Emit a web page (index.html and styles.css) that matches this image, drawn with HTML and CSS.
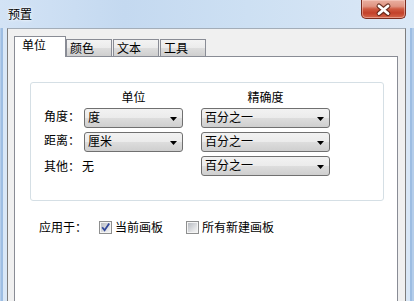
FILE: index.html
```html
<!DOCTYPE html>
<html lang="zh-CN">
<head>
<meta charset="utf-8">
<title>预置</title>
<link rel="stylesheet" href="styles.css">
</head>
<body>
<div class="window">
  <div class="titlebar">
    <span class="title">预置</span>
    <div class="close">
      <svg width="45" height="19" viewBox="0 0 45 19">
        <path d="M18 6 L27 13.5 M27 6 L18 13.5" stroke="#5a2418" stroke-width="5" stroke-linecap="round" fill="none" opacity="0.85"/>
        <path d="M18 6 L27 13.5 M27 6 L18 13.5" stroke="#ffffff" stroke-width="2.8" stroke-linecap="round" fill="none"/>
      </svg>
    </div>
  </div>
  <div class="frame">
    <div class="client">
      <div class="tabs">
        <div class="tab active">单位</div>
        <div class="tab">颜色</div>
        <div class="tab gap">文本</div>
        <div class="tab gap">工具</div>
      </div>
      <div class="panel">
        <div class="group">
          <div class="grid">
            <span></span>
            <span class="head">单位</span>
            <span class="head c3">精确度</span>

            <span class="label">角度：</span>
            <div class="select"><span>度</span><svg class="arrow" width="7" height="4" viewBox="0 0 7 4"><path d="M0 0 H7 L3.5 4 Z" fill="#000"/></svg></div>
            <div class="select c3"><span>百分之一</span><svg class="arrow" width="7" height="4" viewBox="0 0 7 4"><path d="M0 0 H7 L3.5 4 Z" fill="#000"/></svg></div>

            <span class="label">距离：</span>
            <div class="select"><span>厘米</span><svg class="arrow" width="7" height="4" viewBox="0 0 7 4"><path d="M0 0 H7 L3.5 4 Z" fill="#000"/></svg></div>
            <div class="select c3"><span>百分之一</span><svg class="arrow" width="7" height="4" viewBox="0 0 7 4"><path d="M0 0 H7 L3.5 4 Z" fill="#000"/></svg></div>

            <span class="label low">其他：</span>
            <span class="label low none">无</span>
            <div class="select c3"><span>百分之一</span><svg class="arrow" width="7" height="4" viewBox="0 0 7 4"><path d="M0 0 H7 L3.5 4 Z" fill="#000"/></svg></div>
          </div>
        </div>
        <div class="apply">
          <span class="apply-label">应用于：</span>
          <label class="check first">
            <span class="box"><svg width="9" height="9" viewBox="0 0 9 9"><path d="M1.2 4.2 L3.6 7.2 L8.2 0.6" stroke="#31489a" stroke-width="1.8" fill="none"/></svg></span>
            <span>当前画板</span>
          </label>
          <label class="check">
            <span class="box"></span>
            <span>所有新建画板</span>
          </label>
        </div>
      </div>
    </div>
  </div>
</div>
</body>
</html>
```

FILE: styles.css
```css
* { box-sizing: border-box; }

body {
  margin: 0;
  width: 414px;
  height: 301px;
  overflow: hidden;
  font-family: "Noto Sans CJK SC", "Noto Sans", sans-serif;
  font-size: 12px;
  color: #000;
}

.window {
  width: 414px;
  height: 301px;
  display: flex;
  flex-direction: column;
  background: linear-gradient(to right, #d3e3f5 0%, #c4d9f0 30%, #cde0f3 60%, #dbe8f6 100%);
}

.titlebar {
  height: 28px;
  flex: none;
  display: flex;
  justify-content: space-between;
  align-items: flex-start;
  padding: 0 8px 0 8px;
}

.title {
  margin-top: 6px;
  line-height: 16px;
  text-shadow: 0 0 4px #fff, 0 0 2px #fff;
}

.close {
  width: 45px;
  height: 19px;
  border: 1px solid #7a2c1f;
  border-top: none;
  border-radius: 0 0 5px 5px;
  background: linear-gradient(#eab0a1 0%, #e09482 35%, #cf5a41 50%, #c3412a 72%, #d5674b 100%);
  box-shadow: inset 0 0 0 1px rgba(255, 220, 210, 0.45);
  overflow: hidden;
}

.close svg { display: block; margin-left: -1px; }

.frame {
  flex: 1;
  display: flex;
  padding: 0 8px 0 7px;
  min-height: 0;
  background:
    linear-gradient(to right, #b4cdea 0 1px, #9dbde2 1px 3px, #d9e7f6 3px 7px) left top / 7px 100% no-repeat,
    linear-gradient(to right, #d9e7f6 0 4px, #9dbde2 4px 6px, #b4cdea 6px 8px) right top / 8px 100% no-repeat;
}

.client {
  flex: 1;
  display: flex;
  flex-direction: column;
  min-width: 0;
  background: #f0f0f0;
  border: 1px solid #7d7d7d;
  border-top-color: #a3adb8;
  border-bottom: none;
  padding: 7px 7px 0 6px;
}

.tabs {
  display: flex;
  align-items: flex-end;
  height: 20px;
  flex: none;
}

.tab {
  width: 46px;
  height: 17px;
  border: 1px solid #898c95;
  border-bottom: none;
  padding-left: 3px;
  line-height: 16px;
  background: linear-gradient(#f3f3f3 0%, #ebebeb 50%, #dddddd 50%, #cfcfcf 100%);
  white-space: nowrap;
}

.tab.gap { margin-left: 1px; }

.tab.active {
  width: 52px;
  height: 21px;
  margin-bottom: -1px;
  padding-left: 7px;
  background: #fff;
  position: relative;
  z-index: 1;
}

.panel {
  flex: 1;
  background: #fff;
  border: 1px solid #898c95;
  border-bottom: none;
}

.group {
  margin: 25px 0 0 15px;
  width: 354px;
  height: 119px;
  border: 1px solid #d5dfe5;
  border-radius: 3px;
  padding: 6px 0 0 13px;
}

.grid {
  display: grid;
  grid-template-columns: 40px 99px 147px;
  grid-template-rows: 15px 20px 20px 20px;
  row-gap: 4px;
}

.c3 { margin-left: 18px; }

.head {
  text-align: center;
  line-height: 16px;
  white-space: nowrap;
}

.label {
  line-height: 16px;
  white-space: nowrap;
}

.label.low { padding-top: 2px; }
.label.none { margin-left: -2px; }

.select {
  display: flex;
  align-items: center;
  justify-content: space-between;
  border: 1px solid #707070;
  border-radius: 3px;
  background: linear-gradient(#f2f2f2 0%, #ebebeb 50%, #dddddd 50%, #cfcfcf 100%);
  padding: 0 5px 0 3px;
}

.select span {
  line-height: 14px;
  align-self: flex-start;
  margin-top: 1px;
}

.arrow { display: block; margin-top: 1px; }

.apply {
  display: flex;
  align-items: center;
  margin: 18px 0 0 24px;
  line-height: 16px;
}

.apply-label {
  width: 60px;
  white-space: nowrap;
}

.check {
  display: flex;
  align-items: center;
  gap: 3px;
  white-space: nowrap;
}

.check.first { margin-right: 23px; }

.box {
  width: 13px;
  height: 13px;
  border: 1px solid #8e8f8f;
  padding: 1px;
  background: linear-gradient(135deg, #b8bcc2 0%, #e4e5e7 70%, #f3f3f3 100%) content-box, #f4f4f4;
}

.box svg { display: block; }
```
